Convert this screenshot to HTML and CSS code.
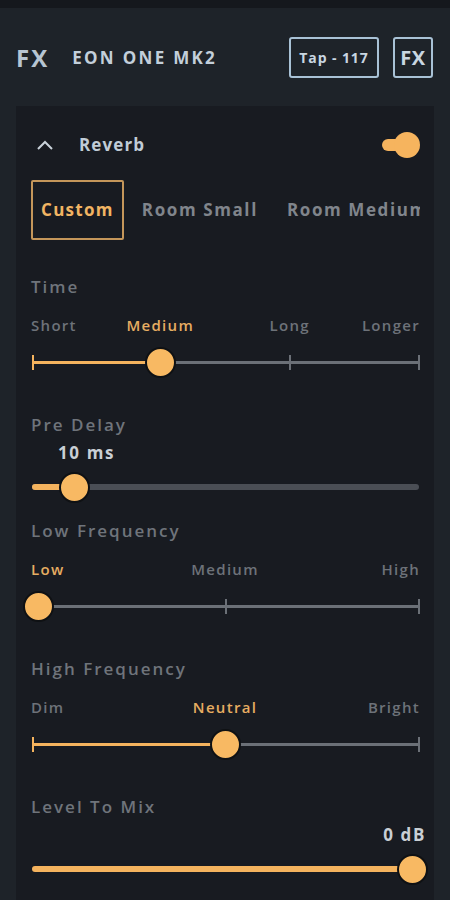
FILE: index.html
```html
<!DOCTYPE html>
<html>
<head>
<meta charset="utf-8">
<link rel="stylesheet" href="styles.css">
</head>
<body>
<div class="topstrip"></div>
<header class="header">
  <div class="title">FX</div>
  <div class="device">EON ONE MK2</div>
  <div class="spacer"></div>
  <div class="btn tap">Tap - 117</div>
  <div class="btn fx">FX</div>
</header>
<main class="panel">
  <div class="reverb-row">
    <svg class="chev" width="18" height="12" viewBox="0 0 18 12"><path d="M2 10 L9 3 L16 10" fill="none" stroke="#c9d2da" stroke-width="2"/></svg>
    <div class="reverb">Reverb</div>
    <div class="spacer"></div>
    <div class="toggle"><span class="stem"></span><span class="knob"></span></div>
  </div>
  <div class="tabs">
    <div class="tab active">Custom</div>
    <div class="tab">Room Small</div>
    <div class="tab">Room Medium</div>
  </div>

  <section class="sec first">
    <div class="label">Time</div>
    <div class="scale">
      <span class="mark start">Short</span>
      <span class="mark mid on" style="left:33.3%">Medium</span>
      <span class="mark mid" style="left:66.7%">Long</span>
      <span class="mark end">Longer</span>
    </div>
    <div class="slider">
      <div class="track thin"></div>
      <div class="fill thin" style="width:33.3%"></div>
      <span class="tick on" style="left:0"></span>
      <span class="tick" style="left:66.7%"></span>
      <span class="tick" style="left:100%"></span>
      <span class="thumb" style="left:33.3%"></span>
    </div>
  </section>

  <section class="sec">
    <div class="label">Pre Delay</div>
    <div class="value left">10 ms</div>
    <div class="slider">
      <div class="track thick"></div>
      <div class="fill thick" style="width:11%"></div>
      <span class="thumb" style="left:11%"></span>
    </div>
  </section>

  <section class="sec tight">
    <div class="label">Low Frequency</div>
    <div class="scale">
      <span class="mark start on">Low</span>
      <span class="mark mid" style="left:50%">Medium</span>
      <span class="mark end">High</span>
    </div>
    <div class="slider">
      <div class="track thin"></div>
      <span class="tick" style="left:50%"></span>
      <span class="tick" style="left:100%"></span>
      <span class="thumb" style="left:1.6%"></span>
    </div>
  </section>

  <section class="sec">
    <div class="label">High Frequency</div>
    <div class="scale">
      <span class="mark start">Dim</span>
      <span class="mark mid on" style="left:50%">Neutral</span>
      <span class="mark end">Bright</span>
    </div>
    <div class="slider">
      <div class="track thin"></div>
      <div class="fill thin" style="width:50%"></div>
      <span class="tick on" style="left:0"></span>
      <span class="tick" style="left:100%"></span>
      <span class="thumb" style="left:50%"></span>
    </div>
  </section>

  <section class="sec">
    <div class="label">Level To Mix</div>
    <div class="value right">0 dB</div>
    <div class="slider">
      <div class="track thick full"></div>
      <span class="thumb" style="left:98.2%"></span>
    </div>
  </section>
</main>
</body>
</html>
```
FILE: styles.css
```css
* { box-sizing: border-box; }
html, body { margin: 0; padding: 0; }
body {
  width: 450px;
  height: 900px;
  overflow: hidden;
  background: #1e2329;
  font-family: "Open Sans", "Noto Sans", sans-serif;
  color: #c7d2dc;
}
.topstrip { height: 8px; background: #15181d; }
.header {
  height: 98px;
  display: flex;
  align-items: center;
  padding: 0 17px 0 16px;
}
.title {
  font-size: 24px;
  font-weight: 700;
  letter-spacing: 2px;
  color: #b7c5d2;
  margin-right: 23px;
}
.device {
  font-size: 17px;
  font-weight: 700;
  letter-spacing: 2.3px;
  color: #c3cfda;
}
.spacer { flex: 1 1 auto; }
.btn {
  height: 41px;
  border: 2.5px solid #a9c2d6;
  border-radius: 3px;
  display: flex;
  align-items: center;
  justify-content: center;
  font-weight: 700;
  color: #c9d6e1;
}
.tap { width: 90px; font-size: 14px; letter-spacing: 0.9px; margin-right: 14px; }
.fx { width: 40px; font-size: 20px; letter-spacing: 0.5px; }

.panel {
  margin: 0 16px;
  height: 794px;
  background: #181b21;
  padding: 0 15px;
}
.reverb-row {
  height: 74px;
  padding-top: 25px;
  display: flex;
  align-items: flex-start;
}
.chev { flex: none; margin: 8px 0 0 5px; }
.reverb {
  flex: none;
  margin-left: 25px;
  font-size: 17px;
  font-weight: 700;
  letter-spacing: 1.1px;
  line-height: 28px;
  color: #c0ccd7;
}
.toggle {
  flex: none;
  position: relative;
  width: 38px;
  height: 28px;
  margin-right: -1px;
}
.stem {
  position: absolute;
  left: 0;
  top: 8px;
  width: 24px;
  height: 12px;
  border-radius: 6px;
  background: #f6b45e;
}
.knob {
  position: absolute;
  right: 0;
  top: 1px;
  width: 26px;
  height: 26px;
  border-radius: 50%;
  background: #f6b45e;
}
.tabs {
  height: 60px;
  display: flex;
  gap: 7px;
  overflow: hidden;
  margin-right: -1px;
}
.tab {
  flex: none;
  height: 60px;
  padding: 0 9px 2px;
  border: 2px solid transparent;
  border-radius: 2px;
  display: flex;
  align-items: center;
  font-size: 17px;
  font-weight: 700;
  letter-spacing: 1.6px;
  color: #80858c;
}
.tab.active { color: #f1b463; border-color: #c4965a; padding: 0 8px 2px; letter-spacing: 1.3px; }

.sec { margin-top: 36px; }
.sec.first { margin-top: 35px; }
.sec.tight { margin-top: 17px; }
.label {
  height: 24px;
  line-height: 24px;
  font-size: 17px;
  font-weight: 600;
  letter-spacing: 2px;
  color: #6f747b;
}
.scale {
  position: relative;
  height: 24px;
  margin-top: 14px;
  line-height: 24px;
  font-size: 15px;
  font-weight: 600;
  letter-spacing: 1.3px;
  color: #6d7279;
}
.mark { position: absolute; top: 0; white-space: nowrap; }
.mark.start { left: 0; }
.mark.end { right: -1px; }
.mark.mid { transform: translateX(-50%); }
.mark.on { color: #e6ad62; }
.value {
  height: 24px;
  line-height: 24px;
  margin-top: 4px;
  font-size: 17px;
  font-weight: 700;
  letter-spacing: 1.6px;
  color: #c9cfd5;
}
.value.left { padding-left: 27px; }
.value.right { text-align: right; margin-right: -7px; }
.scale + .slider { margin-top: 10px; }
.value + .slider { margin-top: 7px; }
.slider {
  position: relative;
  height: 30px;
  margin-left: 1px;
}
.track, .fill {
  position: absolute;
  left: 0;
}
.track { right: 0; background: #6b7077; }
.track.thin, .fill.thin { top: 14px; height: 3px; }
.track.thick, .fill.thick { top: 12px; height: 6px; border-radius: 3px; }
.track.thick { background: #4a4e55; }
.track.full { background: #f4b35e; }
.fill { background: #f4b35e; }
.tick {
  position: absolute;
  top: 8px;
  width: 2px;
  height: 15px;
  margin-left: -1px;
  background: #6b7077;
}
.tick.on { background: #f4b35e; margin-left: 0; }
.thumb {
  position: absolute;
  top: 0;
  width: 31px;
  height: 31px;
  margin-left: -15.5px;
  border-radius: 50%;
  background: #f8b963;
  border: 2px solid #0f1114;
}
```
